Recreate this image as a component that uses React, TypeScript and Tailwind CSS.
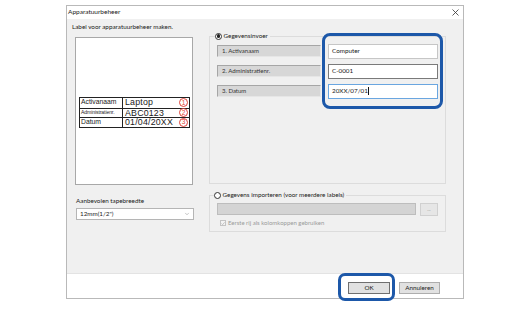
import { ChevronDown } from 'lucide-react';

const UI_FONT = 'Lato, "Noto Sans", sans-serif';

const FIELDS = [
  { label: '1. Activanaam', value: 'Computer', state: 'idle' },
  { label: '2. Administratienr.', value: 'C-0001', state: 'hover' },
  { label: '3. Datum', value: '20XX/07/01', state: 'focus' },
] as const;

const PREVIEW_ROWS = [
  { name: 'Activanaam', value: 'Laptop', n: '1', small: false },
  { name: 'Administratienr.', value: 'ABC0123', n: '2', small: true },
  { name: 'Datum', value: '01/04/20XX', n: '3', small: false },
];

export default function App() {
  return (
    <div
      className="relative w-[531px] h-[311px] overflow-hidden bg-white pt-[5px] pl-[66px] text-[#1a1a1a]"
      style={{ fontFamily: UI_FONT }}
    >
      <div className="flex w-[398px] h-[294px] flex-col border border-[#b9b9b9] bg-white">
        {/* ── Title bar ─────────────────────────────────────────── */}
        <div className="flex h-[13px] shrink-0 items-center justify-between pl-[1px] pr-[4px]">
          <span className="text-[6.5px] leading-none">Apparatuurbeheer</span>
          <svg width="7" height="7" viewBox="0 0 7 7" aria-hidden="true">
            <path d="M0.5 0.5 L6.5 6.5 M6.5 0.5 L0.5 6.5" stroke="#333" strokeWidth="0.8" />
          </svg>
        </div>

        {/* ── Body ──────────────────────────────────────────────── */}
        <div className="flex h-[254px] shrink-0 bg-[#f0f0f0]">
          <LeftPanel />
          <RightPanel />
        </div>

        {/* ── Footer ────────────────────────────────────────────── */}
        <div className="flex flex-1 items-start justify-end gap-[9px] border-t border-[#e3e3e3] pt-[8px] pr-[23px]">
          <DialogButton label="OK" primary />
          <DialogButton label="Annuleren" />
        </div>
      </div>

      {/* Callout highlights drawn over the dialog */}
      <div className="absolute left-[322px] top-[33px] h-[76px] w-[121px] rounded-[8px] border-[3px] border-[#1d58a9]" />
      <div className="absolute left-[338px] top-[273px] h-[28px] w-[57px] rounded-[7px] border-[3px] border-[#1d58a9]" />
    </div>
  );
}

// ── Left: label preview + tape width ─────────────────────────────────────────

function LeftPanel() {
  return (
    <div className="flex w-[142px] shrink-0 flex-col">
      <p className="mt-[3px] ml-[5px] text-[6.3px] leading-[10px]">Label voor apparatuurbeheer maken.</p>

      <div className="mt-[5px] ml-[8px] flex h-[148px] w-[118px] flex-col border border-[#a8a8a8] bg-white pt-[59px] pl-[3px]">
        <div className="w-[111px] border border-[#222]" style={{ fontFamily: '"Liberation Sans", Arial, sans-serif' }}>
          {PREVIEW_ROWS.map((r, i) => (
            <div key={r.name} className={`flex h-[9.6px] items-center ${i > 0 ? 'border-t border-[#222]' : ''}`}>
              <div className="flex h-full w-[43px] shrink-0 items-center border-r border-[#222] pl-[1px]">
                <span className={r.small ? 'text-[5.1px] leading-none tracking-[-0.1px]' : 'text-[6.8px] leading-none'}>
                  {r.name}
                </span>
              </div>
              <span className="ml-[2px] flex-1 text-[8.8px] leading-none tracking-[0.2px]">{r.value}</span>
              <span className="mr-[1px] flex h-[9px] w-[9px] items-center justify-center rounded-full border border-[#e0443a] text-[6.5px] leading-none text-[#e0443a]">
                {r.n}
              </span>
            </div>
          ))}
        </div>
      </div>

      <p className="mt-[11px] ml-[9px] text-[6.3px] leading-[10px]">Aanbevolen tapebreedte</p>
      <div className="mt-[2px] ml-[9px] flex h-[12px] w-[118px] items-center justify-between border border-[#b5b5b5] bg-white pl-[3px] pr-[3px]">
        <span className="text-[6.3px] leading-none">12mm(1/2")</span>
        <ChevronDown size={6} strokeWidth={1.5} color="#666" />
      </div>
    </div>
  );
}

// ── Right: data entry / import group boxes ───────────────────────────────────

function RightPanel() {
  return (
    <div className="flex w-[237px] shrink-0 flex-col">
      <div className="relative mt-[17px] h-[148px] w-[237px] border border-[#dcdcdc] pt-[4px] pl-[7px]">
        <RadioLegend label="Gegevensinvoer" checked className="left-[5px]" />
        {FIELDS.map((f) => (
          <div key={f.label} className="flex h-[20px] items-center">
            <div className="flex h-[12px] w-[104px] items-center border border-[#a6a6a6] border-r-[#e6e6e6] border-b-[#e6e6e6] bg-[#d7d7d7] pl-[4px]">
              <span className="text-[6px] leading-none text-[#333]">{f.label}</span>
            </div>
            <div
              className={`ml-[7px] flex h-[15px] w-[110px] items-center border bg-white pl-[3px] ${
                f.state === 'hover' ? 'border-[#7a7a7a]' : f.state === 'focus' ? 'border-[#6aa6e0]' : 'border-[#c6c6c6]'
              }`}
            >
              <span className="text-[6.3px] leading-none">{f.value}</span>
              {f.state === 'focus' && <span className="ml-[0.5px] h-[8px] w-[1px] bg-[#111]" />}
            </div>
          </div>
        ))}
      </div>

      <div className="relative mt-[11px] h-[37px] w-[237px] border border-[#dcdcdc] pt-[7px] pl-[7px]">
        <RadioLegend label="Gegevens importeren (voor meerdere labels)" className="left-[4px]" />
        <div className="flex items-start gap-[4px]">
          <div className="h-[12px] w-[199px] border border-[#bdbdbd] bg-[#d4d4d4]" />
          <div className="flex h-[13px] w-[18px] items-center justify-center border border-[#d0d0d0] bg-[#e6e6e6]">
            <span className="text-[5px] leading-none text-[#a0a0a0]">...</span>
          </div>
        </div>
        <div className="mt-[4px] ml-[3px] flex items-center gap-[2px]">
          <span className="flex h-[6px] w-[6px] items-center justify-center border border-[#c4c4c4] bg-[#f4f4f4]">
            <svg width="5" height="5" viewBox="0 0 5 5" aria-hidden="true">
              <path d="M0.6 2.6 L2 4 L4.5 1" fill="none" stroke="#a8a8a8" strokeWidth="0.8" />
            </svg>
          </span>
          <span className="text-[6px] leading-none text-[#9a9a9a]">Eerste rij als kolomkoppen gebruiken</span>
        </div>
      </div>
    </div>
  );
}

function RadioLegend({ label, checked, className }: { label: string; checked?: boolean; className: string }) {
  return (
    <div className={`absolute top-[-6px] flex items-center gap-[1.5px] bg-[#f0f0f0] pr-[2px] ${className}`}>
      <span className="flex h-[7px] w-[7px] items-center justify-center rounded-full border border-[#333] bg-white">
        {checked && <span className="h-[3.5px] w-[3.5px] rounded-full bg-[#222]" />}
      </span>
      <span className="text-[6.3px] leading-[10px]">{label}</span>
    </div>
  );
}

function DialogButton({ label, primary }: { label: string; primary?: boolean }) {
  return (
    <div
      className={`flex h-[12px] items-center justify-center border bg-[#e1e1e1] ${
        primary ? 'w-[42px] border-[#6f6f6f]' : 'w-[41px] border-[#adadad]'
      }`}
    >
      <span className="text-[6.3px] leading-none">{label}</span>
    </div>
  );
}
